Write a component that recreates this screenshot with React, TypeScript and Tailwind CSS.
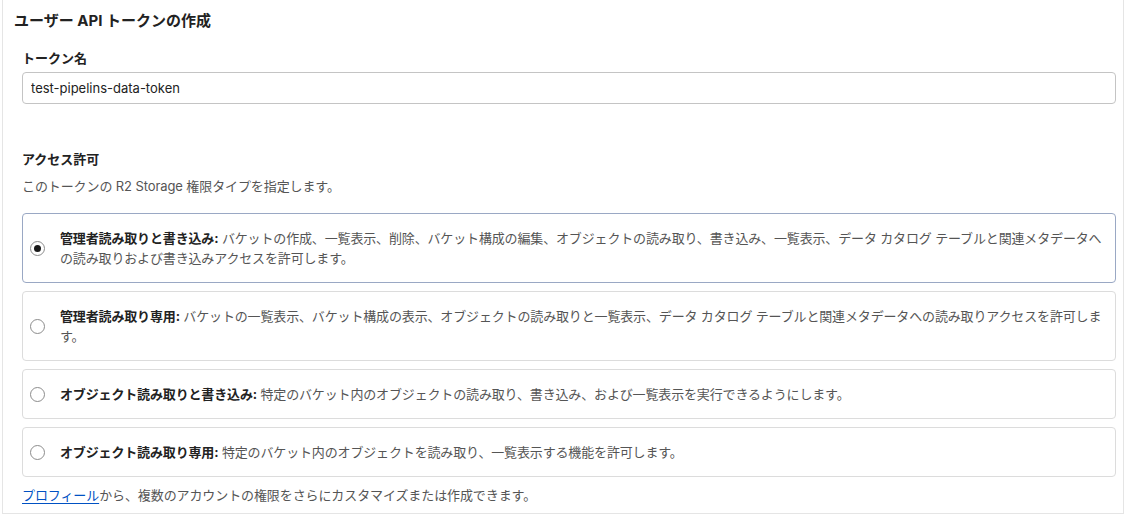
import { useState } from 'react';

const options = [
  {
    id: 'admin-rw',
    title: '管理者読み取りと書き込み:',
    body: 'バケットの作成、一覧表示、削除、バケット構成の編集、オブジェクトの読み取り、書き込み、一覧表示、データ カタログ テーブルと関連メタデータへの読み取りおよび書き込みアクセスを許可します。',
  },
  {
    id: 'admin-r',
    title: '管理者読み取り専用:',
    body: 'バケットの一覧表示、バケット構成の表示、オブジェクトの読み取りと一覧表示、データ カタログ テーブルと関連メタデータへの読み取りアクセスを許可します。',
  },
  {
    id: 'object-rw',
    title: 'オブジェクト読み取りと書き込み:',
    body: '特定のバケット内のオブジェクトの読み取り、書き込み、および一覧表示を実行できるようにします。',
  },
  {
    id: 'object-r',
    title: 'オブジェクト読み取り専用:',
    body: '特定のバケット内のオブジェクトを読み取り、一覧表示する機能を許可します。',
  },
];

export default function App() {
  const [selected, setSelected] = useState('admin-rw');
  const [name, setName] = useState('test-pipelins-data-token');

  return (
    <div className="w-[1125px] h-[516px] bg-white font-['Inter','Noto_Sans_CJK_JP',sans-serif] text-[#36393a]">
      <div className="ml-[2px] mr-[1px] h-[514px] border border-t-0 border-[#e5e5e5] bg-white">
        {/* Header */}
        <h1 className="pl-[11px] pt-[10px] text-[15px] font-bold leading-[22px] text-[#222]">
          ユーザー API トークンの作成
        </h1>

        <div className="pl-[19px] pr-[7px]">
          {/* Token name */}
          <label className="mt-[16px] block text-[13px] font-bold leading-[20px] text-[#222]">
            トークン名
          </label>
          <input
            value={name}
            onChange={(e) => setName(e.target.value)}
            className="mt-[4px] block h-[32px] w-full rounded-[4px] border border-[#c4c4c4] px-[8px] text-[13px] text-[#222] outline-none"
          />

          {/* Access */}
          <h2 className="mt-[45px] text-[13px] font-bold leading-[20px] text-[#222]">アクセス許可</h2>
          <p className="mt-[7px] text-[13px] leading-[20px] tracking-[-0.1px] text-[#555]">
            このトークンの R2 Storage 権限タイプを指定します。
          </p>

          <div className="mt-[17px] flex flex-col gap-[8px]">
            {options.map((opt) => {
              const active = selected === opt.id;
              return (
                <label
                  key={opt.id}
                  onClick={() => setSelected(opt.id)}
                  className={`flex cursor-pointer items-center rounded-[4px] border py-[14px] pl-[7px] pr-[8px] ${
                    active ? 'border-[#9aa8c4]' : 'border-[#dcdcdc]'
                  }`}
                >
                  <span className="flex h-[15px] w-[15px] shrink-0 items-center justify-center rounded-full border border-[#8c8c8c] bg-white">
                    {active && <span className="h-[7px] w-[7px] rounded-full bg-[#1a1a1a]" />}
                  </span>
                  <span className="ml-[15px] text-[13px] leading-[20px] tracking-[-0.15px] text-[#555]">
                    <span className="font-bold text-[#222]">{opt.title}</span> {opt.body}
                  </span>
                </label>
              );
            })}
          </div>

          <p className="mt-[8px] text-[13px] leading-[20px] tracking-[-0.1px] text-[#555]">
            <a href="#" className="text-[#0051c3] underline underline-offset-[3px]">
              プロフィール
            </a>
            から、複数のアカウントの権限をさらにカスタマイズまたは作成できます。
          </p>
        </div>
      </div>
    </div>
  );
}
